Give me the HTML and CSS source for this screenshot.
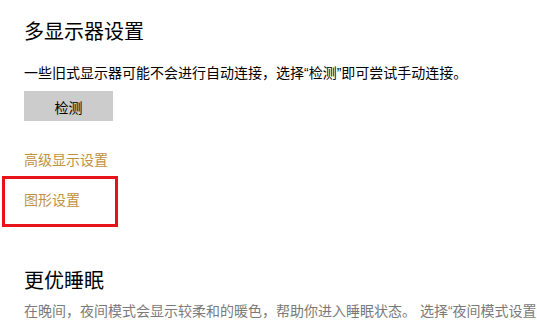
FILE: index.html
```html
<!DOCTYPE html>
<html lang="zh-CN">
<head>
<meta charset="utf-8">
<link rel="stylesheet" href="styles.css">
</head>
<body>
<div class="page">
  <h1 class="title">多显示器设置</h1>
  <p class="text">一些旧式显示器可能不会进行自动连接，选择“检测”即可尝试手动连接。</p>
  <button class="btn">检测</button>
  <a class="link link-first">高级显示设置</a>
  <a class="link link-second">图形设置</a>
  <h2 class="title title-second">更优睡眠</h2>
  <p class="text desc">在晚间，夜间模式会显示较柔和的暖色，帮助你进入睡眠状态。 选择“夜间模式设置</p>
  <div class="highlight"></div>
</div>
</body>
</html>
```
FILE: styles.css
```css
html, body {
  margin: 0;
  padding: 0;
  background: #fff;
  width: 537px;
  height: 323px;
  overflow: hidden;
}
.page {
  position: relative;
  display: flex;
  flex-direction: column;
  align-items: flex-start;
  padding: 18px 0 0 24px;
  font-family: "Liberation Sans", "Noto Sans CJK SC", sans-serif;
  color: #000;
}
.title {
  margin: 0;
  font-size: 20px;
  font-weight: normal;
  line-height: 28px;
}
.text {
  margin: 17px 0 0 0;
  font-size: 14px;
  line-height: 20px;
  white-space: nowrap;
}
.btn {
  margin-top: 8px;
  width: 89px;
  height: 30px;
  border: none;
  background: #cccccc;
  font-family: inherit;
  font-size: 14px;
  color: #000;
  padding: 1px 0 0 0;
}
.link {
  font-size: 14px;
  line-height: 20px;
  color: #c0913f;
}
.link-first {
  margin-top: 29px;
}
.link-second {
  margin-top: 20px;
}
.title-second {
  margin-top: 57px;
}
.desc {
  margin-top: 6px;
  color: #7a7a7a;
}
.highlight {
  position: absolute;
  left: 2px;
  top: 176px;
  width: 110px;
  height: 45px;
  border: 3px solid #e8121b;
}
```
